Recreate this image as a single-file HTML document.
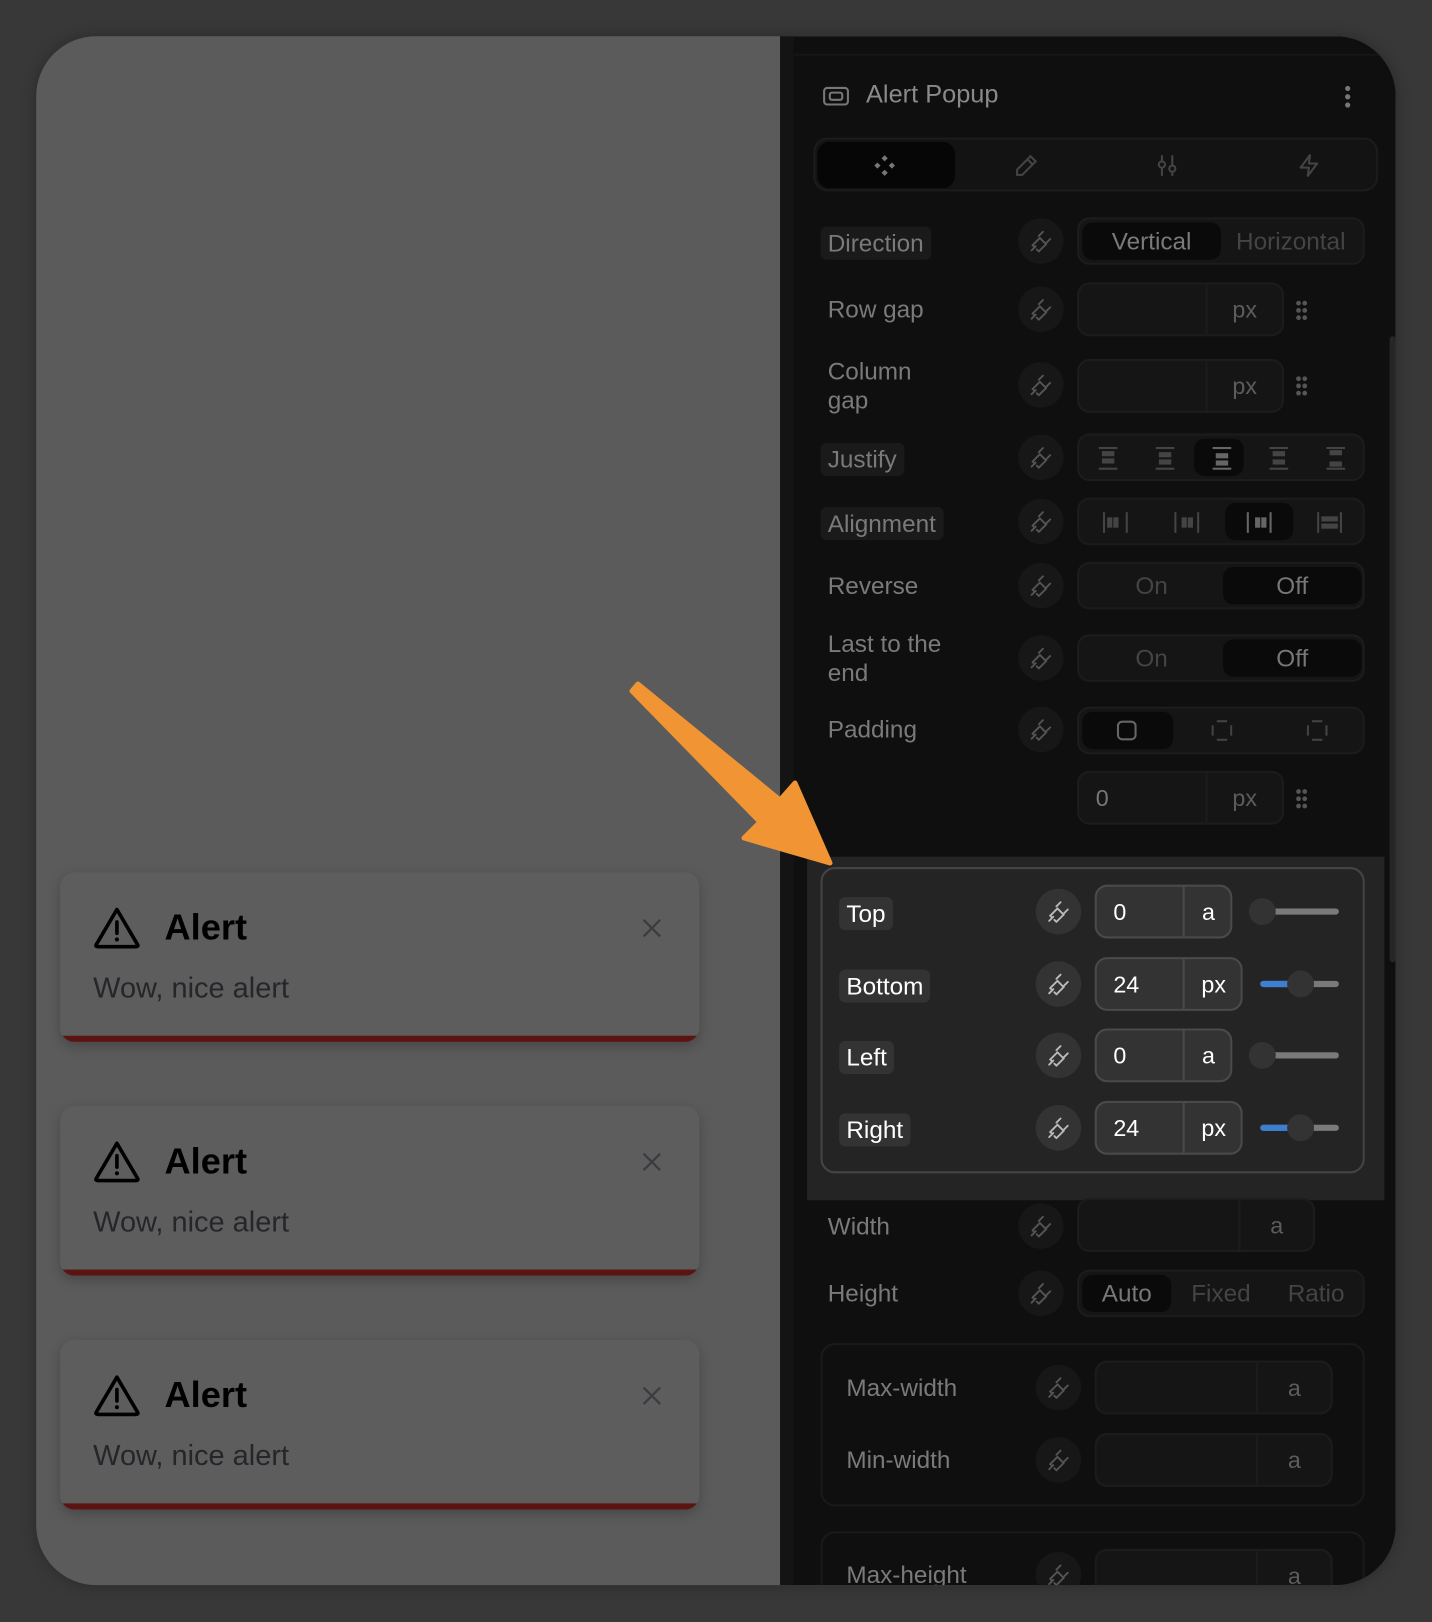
<!DOCTYPE html>
<html><head><meta charset="utf-8"><style>
*{box-sizing:border-box;margin:0;padding:0}
html,body{width:1432px;height:1622px;overflow:hidden;background:#383838;font-family:"Liberation Sans",sans-serif}
#w{position:absolute;left:0;top:0;width:1384px;height:1568px;transform:scale(1.03468);transform-origin:0 0}
.a{position:absolute}
.card{left:35px;top:35px;width:1314px;height:1497px;border-radius:58px;overflow:hidden;background:#5b5b5b;box-shadow:0 0 14px rgba(0,0,0,.25)}
.clip{left:35px;top:35px;width:1314px;height:1497px;border-radius:58px;overflow:hidden}
.inner{left:-35px;top:-35px;width:1384px;height:1568px}
.panel{left:719px;top:0;width:595px;height:1497px;background:#0f0f0f;border-left:13px solid #141414}
.alert{left:23px;width:618px;height:164px;background:#5d5d5d;border-radius:14px;box-shadow:0 4px 12px rgba(0,0,0,.22);overflow:hidden}
.alert .bar{left:0;bottom:0;width:100%;height:6px;background:#5a1512}
.alert .t{left:101px;top:34px;font-size:35px;font-weight:bold;color:#000}
.alert .m{left:32px;top:96px;font-size:28px;color:#26262a}
.alert .x{left:560px;top:42px;width:24px;height:24px}
.lbl{font-size:23.5px;color:#7a7a7a;line-height:28px}
.chip{background:#1a1a1a;border-radius:6px;padding:2px 7px;margin-left:-7px}
.plug{width:44px;height:44px;border-radius:22px;background:#171717}
.plug svg{position:absolute;left:11px;top:11px}
.seg{height:46px;border:2px solid #1c1c1c;background:#151515;border-radius:12px}
.seg .o{position:absolute;top:3px;height:36px;font-size:23.5px;color:#444;text-align:center;line-height:36px;border-radius:10px}
.seg .on{background:#0a0a0a;color:#777}
.inp{height:52px;border:2px solid #1c1c1c;background:#151515;border-radius:12px}
.inp .d{position:absolute;top:0;bottom:0;width:2px;background:#1c1c1c}
.inp .u{position:absolute;top:12px;font-size:22.5px;color:#5c5c5c;text-align:center}
.dots{width:12px;height:20px}
.hl .lbl{color:#fff}
.hl .chip{background:#333}
.hl .plug{background:#333}
.hl .inp{background:#333;border-color:#4a4a4a}
.hl .inp .d{background:#4a4a4a}
.hl .inp .u{color:#fff}
.track{height:6px;background:#7a7a7a;border-radius:3px}
.thumb{width:26px;height:26px;border-radius:13px;background:#333}
</style></head><body>
<div id="w">
<div class="a card">
  <div class="a alert" style="top:808px">
    <svg class="a" style="left:32px;top:33px" width="46" height="42" viewBox="0 0 46 42"><path d="M23 3 L43 37 Q44 39 41 39 L5 39 Q2 39 3 37 Z" fill="none" stroke="#000" stroke-width="3.5" stroke-linejoin="round"/><path d="M23 15 V26" stroke="#000" stroke-width="3.5" stroke-linecap="round"/><circle cx="23" cy="32" r="2" fill="#000"/></svg>
    <div class="a t">Alert</div><div class="a m">Wow, nice alert</div>
    <svg class="a x" viewBox="0 0 24 24"><path d="M4 4L20 20M20 4L4 20" stroke="#3c3c40" stroke-width="2.2"/></svg>
    <div class="a bar"></div>
  </div>
  <div class="a alert" style="top:1034px">
    <svg class="a" style="left:32px;top:33px" width="46" height="42" viewBox="0 0 46 42"><path d="M23 3 L43 37 Q44 39 41 39 L5 39 Q2 39 3 37 Z" fill="none" stroke="#000" stroke-width="3.5" stroke-linejoin="round"/><path d="M23 15 V26" stroke="#000" stroke-width="3.5" stroke-linecap="round"/><circle cx="23" cy="32" r="2" fill="#000"/></svg>
    <div class="a t">Alert</div><div class="a m">Wow, nice alert</div>
    <svg class="a x" viewBox="0 0 24 24"><path d="M4 4L20 20M20 4L4 20" stroke="#3c3c40" stroke-width="2.2"/></svg>
    <div class="a bar"></div>
  </div>
  <div class="a alert" style="top:1260px">
    <svg class="a" style="left:32px;top:33px" width="46" height="42" viewBox="0 0 46 42"><path d="M23 3 L43 37 Q44 39 41 39 L5 39 Q2 39 3 37 Z" fill="none" stroke="#000" stroke-width="3.5" stroke-linejoin="round"/><path d="M23 15 V26" stroke="#000" stroke-width="3.5" stroke-linecap="round"/><circle cx="23" cy="32" r="2" fill="#000"/></svg>
    <div class="a t">Alert</div><div class="a m">Wow, nice alert</div>
    <svg class="a x" viewBox="0 0 24 24"><path d="M4 4L20 20M20 4L4 20" stroke="#3c3c40" stroke-width="2.2"/></svg>
    <div class="a bar"></div>
  </div>
  <div class="a panel"></div>
</div>

<div class="a clip"><div class="a inner">
<div class="a" style="left:767px;top:52px;width:582px;height:2px;background:#161616"></div>
<svg class="a" style="left:795px;top:83px" width="26" height="20" viewBox="0 0 26 20"><rect x="1.5" y="2" width="23" height="16" rx="3" fill="none" stroke="#777" stroke-width="2"/><rect x="7" y="6.5" width="12" height="7" rx="2" fill="none" stroke="#777" stroke-width="2"/></svg>
<div class="a" style="left:837px;top:78px;font-size:24.5px;color:#8a8a8a">Alert Popup</div>
<div class="a" style="left:1300px;top:83px;width:5px;height:20px"><div class="a" style="left:0;top:0;width:5px;height:5px;border-radius:3px;background:#777"></div><div class="a" style="left:0;top:8px;width:5px;height:5px;border-radius:3px;background:#777"></div><div class="a" style="left:0;top:16px;width:5px;height:5px;border-radius:3px;background:#777"></div></div>

<div class="a" style="left:786px;top:133px;width:546px;height:52px;border:2px solid #1c1c1c;background:#131313;border-radius:14px">
  <div class="a" style="left:2px;top:2px;width:133px;height:45px;background:#060606;border-radius:12px"></div>
  <svg class="a" style="left:55px;top:13px" width="24" height="24" viewBox="0 0 24 24" fill="#777"><path d="M12 2l3 3-3 3-3-3z M5 9l3 3-3 3-3-3z M19 9l3 3-3 3-3-3z M12 16l3 3-3 3-3-3z"/></svg>
  <svg class="a" style="left:192px;top:13px" width="24" height="24" viewBox="0 0 24 24" fill="none" stroke="#444" stroke-width="2"><path d="M16 3l5 5L8 21H3v-5z M13 6l5 5"/></svg>
  <svg class="a" style="left:328px;top:13px" width="24" height="24" viewBox="0 0 24 24" fill="none" stroke="#444" stroke-width="2"><path d="M7 2v6M7 14v8M17 2v10M17 18v4"/><circle cx="7" cy="11" r="3"/><circle cx="17" cy="15" r="3"/></svg>
  <svg class="a" style="left:465px;top:13px" width="24" height="24" viewBox="0 0 24 24" fill="none" stroke="#444" stroke-width="2" stroke-linejoin="round"><path d="M13 2L4 14h8l-1 8 9-12h-8z"/></svg>
</div>

<div class="a lbl chip" style="left:800px;top:219px">Direction</div>
<div class="a plug" style="left:984px;top:211px"><svg width="22" height="22" viewBox="0 0 22 22" stroke="#555"><path d="M2 20l4-4M5 17l-2-2 1-1 6-6 6 6-6 6-1 1-2-2M9 6l4-4M16 13l4-4" fill="none" stroke-width="1.8" stroke-linecap="round"/></svg></div>
<div class="a seg" style="left:1041px;top:210px;width:278px"><div class="o on" style="left:3px;width:134px;color:#7a7a7a">Vertical</div><div class="o" style="left:137px;width:135px">Horizontal</div></div>

<div class="a lbl" style="left:800px;top:285px">Row gap</div>
<div class="a plug" style="left:984px;top:277px"><svg width="22" height="22" viewBox="0 0 22 22" stroke="#555"><path d="M2 20l4-4M5 17l-2-2 1-1 6-6 6 6-6 6-1 1-2-2M9 6l4-4M16 13l4-4" fill="none" stroke-width="1.8" stroke-linecap="round"/></svg></div>
<div class="a inp" style="left:1041px;top:273px;width:200px"><div class="d" style="left:122px"></div><div class="u" style="left:124px;width:72px">px</div></div>
<svg class="a dots" style="left:1252px;top:290px" viewBox="0 0 12 20" fill="#555"><circle cx="3" cy="3" r="2.3"/><circle cx="9" cy="3" r="2.3"/><circle cx="3" cy="10" r="2.3"/><circle cx="9" cy="10" r="2.3"/><circle cx="3" cy="17" r="2.3"/><circle cx="9" cy="17" r="2.3"/></svg>

<div class="a lbl" style="left:800px;top:345px">Column<br>gap</div>
<div class="a plug" style="left:984px;top:350px"><svg width="22" height="22" viewBox="0 0 22 22" stroke="#555"><path d="M2 20l4-4M5 17l-2-2 1-1 6-6 6 6-6 6-1 1-2-2M9 6l4-4M16 13l4-4" fill="none" stroke-width="1.8" stroke-linecap="round"/></svg></div>
<div class="a inp" style="left:1041px;top:347px;width:200px"><div class="d" style="left:122px"></div><div class="u" style="left:124px;width:72px">px</div></div>
<svg class="a dots" style="left:1252px;top:363px" viewBox="0 0 12 20" fill="#555"><circle cx="3" cy="3" r="2.3"/><circle cx="9" cy="3" r="2.3"/><circle cx="3" cy="10" r="2.3"/><circle cx="9" cy="10" r="2.3"/><circle cx="3" cy="17" r="2.3"/><circle cx="9" cy="17" r="2.3"/></svg>

<div class="a lbl chip" style="left:800px;top:428px">Justify</div>
<div class="a plug" style="left:984px;top:420px"><svg width="22" height="22" viewBox="0 0 22 22" stroke="#555"><path d="M2 20l4-4M5 17l-2-2 1-1 6-6 6 6-6 6-1 1-2-2M9 6l4-4M16 13l4-4" fill="none" stroke-width="1.8" stroke-linecap="round"/></svg></div>
<div class="a seg" style="left:1041px;top:419px;width:278px">
  <div class="o on" style="left:111px;width:48px"></div>
  <svg class="a" style="left:17px;top:10px" width="22" height="24" viewBox="0 0 22 24" fill="#444"><rect x="2" y="1" width="18" height="2"/><rect x="5" y="5" width="12" height="5"/><rect x="5" y="12" width="12" height="5"/><rect x="2" y="21" width="18" height="2"/></svg>
  <svg class="a" style="left:72px;top:10px" width="22" height="24" viewBox="0 0 22 24" fill="#444"><rect x="2" y="1" width="18" height="2"/><rect x="5" y="6" width="12" height="5"/><rect x="5" y="13" width="12" height="5"/><rect x="2" y="21" width="18" height="2"/></svg>
  <svg class="a" style="left:127px;top:10px" width="22" height="24" viewBox="0 0 22 24" fill="#666"><rect x="2" y="1" width="18" height="2"/><rect x="5" y="7" width="12" height="5"/><rect x="5" y="14" width="12" height="5"/><rect x="2" y="21" width="18" height="2"/></svg>
  <svg class="a" style="left:182px;top:10px" width="22" height="24" viewBox="0 0 22 24" fill="#444"><rect x="2" y="1" width="18" height="2"/><rect x="5" y="5" width="12" height="5"/><rect x="5" y="13" width="12" height="5"/><rect x="2" y="21" width="18" height="2"/></svg>
  <svg class="a" style="left:237px;top:10px" width="22" height="24" viewBox="0 0 22 24" fill="#444"><rect x="2" y="1" width="18" height="2"/><rect x="5" y="4" width="12" height="5"/><rect x="5" y="15" width="12" height="5"/><rect x="2" y="21" width="18" height="2"/></svg>
</div>

<div class="a lbl chip" style="left:800px;top:490px">Alignment</div>
<div class="a plug" style="left:984px;top:482px"><svg width="22" height="22" viewBox="0 0 22 22" stroke="#555"><path d="M2 20l4-4M5 17l-2-2 1-1 6-6 6 6-6 6-1 1-2-2M9 6l4-4M16 13l4-4" fill="none" stroke-width="1.8" stroke-linecap="round"/></svg></div>
<div class="a seg" style="left:1041px;top:481px;width:278px">
  <div class="o on" style="left:141px;width:66px"></div>
  <svg class="a" style="left:22px;top:10px" width="26" height="24" viewBox="0 0 26 24" fill="#444"><rect x="1" y="2" width="2" height="20"/><rect x="23" y="2" width="2" height="20"/><rect x="5" y="7" width="5" height="10"/><rect x="11" y="7" width="5" height="10"/></svg>
  <svg class="a" style="left:91px;top:10px" width="26" height="24" viewBox="0 0 26 24" fill="#444"><rect x="1" y="2" width="2" height="20"/><rect x="23" y="2" width="2" height="20"/><rect x="8" y="7" width="5" height="10"/><rect x="14" y="7" width="5" height="10"/></svg>
  <svg class="a" style="left:161px;top:10px" width="26" height="24" viewBox="0 0 26 24" fill="#666"><rect x="1" y="2" width="2" height="20"/><rect x="23" y="2" width="2" height="20"/><rect x="9" y="7" width="5" height="10"/><rect x="15" y="7" width="5" height="10"/></svg>
  <svg class="a" style="left:229px;top:10px" width="26" height="24" viewBox="0 0 26 24" fill="#444"><rect x="1" y="2" width="2" height="20"/><rect x="23" y="2" width="2" height="20"/><rect x="5" y="6" width="16" height="5"/><rect x="5" y="13" width="16" height="5"/></svg>
</div>

<div class="a lbl" style="left:800px;top:552px">Reverse</div>
<div class="a plug" style="left:984px;top:544px"><svg width="22" height="22" viewBox="0 0 22 22" stroke="#555"><path d="M2 20l4-4M5 17l-2-2 1-1 6-6 6 6-6 6-1 1-2-2M9 6l4-4M16 13l4-4" fill="none" stroke-width="1.8" stroke-linecap="round"/></svg></div>
<div class="a seg" style="left:1041px;top:543px;width:278px"><div class="o" style="left:3px;width:134px">On</div><div class="o on" style="left:139px;width:134px">Off</div></div>

<div class="a lbl" style="left:800px;top:608px">Last to the<br>end</div>
<div class="a plug" style="left:984px;top:614px"><svg width="22" height="22" viewBox="0 0 22 22" stroke="#555"><path d="M2 20l4-4M5 17l-2-2 1-1 6-6 6 6-6 6-1 1-2-2M9 6l4-4M16 13l4-4" fill="none" stroke-width="1.8" stroke-linecap="round"/></svg></div>
<div class="a seg" style="left:1041px;top:613px;width:278px"><div class="o" style="left:3px;width:134px">On</div><div class="o on" style="left:139px;width:134px">Off</div></div>

<div class="a lbl" style="left:800px;top:691px">Padding</div>
<div class="a plug" style="left:984px;top:683px"><svg width="22" height="22" viewBox="0 0 22 22" stroke="#555"><path d="M2 20l4-4M5 17l-2-2 1-1 6-6 6 6-6 6-1 1-2-2M9 6l4-4M16 13l4-4" fill="none" stroke-width="1.8" stroke-linecap="round"/></svg></div>
<div class="a seg" style="left:1041px;top:683px;width:278px">
  <div class="o on" style="left:3px;width:88px"></div>
  <svg class="a" style="left:36px;top:11px" width="20" height="20" viewBox="0 0 20 20"><rect x="1.5" y="1.5" width="17" height="17" rx="4" fill="none" stroke="#666" stroke-width="2"/></svg>
  <svg class="a" style="left:128px;top:11px" width="20" height="20" viewBox="0 0 20 20" stroke="#444" stroke-width="2" fill="none"><path d="M5 1h10M5 19h10M1 5v10M19 5v10"/></svg>
  <svg class="a" style="left:220px;top:11px" width="20" height="20" viewBox="0 0 20 20" stroke="#444" stroke-width="2" fill="none"><path d="M5 1h10M5 19h10M1 5v10M19 5v10"/></svg>
</div>
<div class="a inp" style="left:1041px;top:745px;width:200px"><div class="u" style="left:16px;color:#777">0</div><div class="d" style="left:122px"></div><div class="u" style="left:124px;width:72px">px</div></div>
<svg class="a dots" style="left:1252px;top:762px" viewBox="0 0 12 20" fill="#555"><circle cx="3" cy="3" r="2.3"/><circle cx="9" cy="3" r="2.3"/><circle cx="3" cy="10" r="2.3"/><circle cx="9" cy="10" r="2.3"/><circle cx="3" cy="17" r="2.3"/><circle cx="9" cy="17" r="2.3"/></svg>

<div class="a hl" style="left:780px;top:828px;width:558px;height:332px;background:#242424">
  <div class="a" style="left:13px;top:10px;width:526px;height:296px;border:2px solid #444;border-radius:14px"></div>
</div>
<div class="hl">
  <div class="a lbl chip" style="left:818px;top:867px">Top</div>
  <div class="a lbl chip" style="left:818px;top:937px">Bottom</div>
  <div class="a lbl chip" style="left:818px;top:1006px">Left</div>
  <div class="a lbl chip" style="left:818px;top:1076px">Right</div>
  <div class="a plug" style="left:1001px;top:859px"><svg width="22" height="22" viewBox="0 0 22 22" stroke="#bbb"><path d="M2 20l4-4M5 17l-2-2 1-1 6-6 6 6-6 6-1 1-2-2M9 6l4-4M16 13l4-4" fill="none" stroke-width="1.8" stroke-linecap="round"/></svg></div>
  <div class="a plug" style="left:1001px;top:929px"><svg width="22" height="22" viewBox="0 0 22 22" stroke="#bbb"><path d="M2 20l4-4M5 17l-2-2 1-1 6-6 6 6-6 6-1 1-2-2M9 6l4-4M16 13l4-4" fill="none" stroke-width="1.8" stroke-linecap="round"/></svg></div>
  <div class="a plug" style="left:1001px;top:998px"><svg width="22" height="22" viewBox="0 0 22 22" stroke="#bbb"><path d="M2 20l4-4M5 17l-2-2 1-1 6-6 6 6-6 6-1 1-2-2M9 6l4-4M16 13l4-4" fill="none" stroke-width="1.8" stroke-linecap="round"/></svg></div>
  <div class="a plug" style="left:1001px;top:1068px"><svg width="22" height="22" viewBox="0 0 22 22" stroke="#bbb"><path d="M2 20l4-4M5 17l-2-2 1-1 6-6 6 6-6 6-1 1-2-2M9 6l4-4M16 13l4-4" fill="none" stroke-width="1.8" stroke-linecap="round"/></svg></div>
  <div class="a inp" style="left:1058px;top:855px;width:133px"><div class="u" style="left:16px">0</div><div class="d" style="left:83px"></div><div class="u" style="left:85px;width:46px">a</div></div>
  <div class="a inp" style="left:1058px;top:925px;width:143px"><div class="u" style="left:16px">24</div><div class="d" style="left:83px"></div><div class="u" style="left:85px;width:56px">px</div></div>
  <div class="a inp" style="left:1058px;top:994px;width:133px"><div class="u" style="left:16px">0</div><div class="d" style="left:83px"></div><div class="u" style="left:85px;width:46px">a</div></div>
  <div class="a inp" style="left:1058px;top:1064px;width:143px"><div class="u" style="left:16px">24</div><div class="d" style="left:83px"></div><div class="u" style="left:85px;width:56px">px</div></div>
  <div class="a track" style="left:1220px;top:878px;width:74px"></div><div class="a thumb" style="left:1207px;top:868px"></div>
  <div class="a track" style="left:1218px;top:948px;width:76px"></div><div class="a" style="left:1218px;top:948px;width:40px;height:6px;background:#3b7ed2;border-radius:3px"></div><div class="a thumb" style="left:1244px;top:938px"></div>
  <div class="a track" style="left:1220px;top:1017px;width:74px"></div><div class="a thumb" style="left:1207px;top:1007px"></div>
  <div class="a track" style="left:1218px;top:1087px;width:76px"></div><div class="a" style="left:1218px;top:1087px;width:40px;height:6px;background:#3b7ed2;border-radius:3px"></div><div class="a thumb" style="left:1244px;top:1077px"></div>
</div>

<div class="a lbl" style="left:800px;top:1171px">Width</div>
<div class="a plug" style="left:984px;top:1163px"><svg width="22" height="22" viewBox="0 0 22 22" stroke="#555"><path d="M2 20l4-4M5 17l-2-2 1-1 6-6 6 6-6 6-1 1-2-2M9 6l4-4M16 13l4-4" fill="none" stroke-width="1.8" stroke-linecap="round"/></svg></div>
<div class="a inp" style="left:1041px;top:1158px;width:230px"><div class="d" style="left:154px"></div><div class="u" style="left:156px;width:70px">a</div></div>

<div class="a lbl" style="left:800px;top:1236px">Height</div>
<div class="a plug" style="left:984px;top:1228px"><svg width="22" height="22" viewBox="0 0 22 22" stroke="#555"><path d="M2 20l4-4M5 17l-2-2 1-1 6-6 6 6-6 6-1 1-2-2M9 6l4-4M16 13l4-4" fill="none" stroke-width="1.8" stroke-linecap="round"/></svg></div>
<div class="a seg" style="left:1041px;top:1227px;width:278px"><div class="o on" style="left:3px;width:86px">Auto</div><div class="o" style="left:92px;width:90px">Fixed</div><div class="o" style="left:184px;width:90px">Ratio</div></div>

<div class="a" style="left:793px;top:1298px;width:526px;height:158px;border:2px solid #1a1a1a;border-radius:14px"></div>
<div class="a lbl" style="left:818px;top:1327px">Max-width</div>
<div class="a plug" style="left:1001px;top:1319px"><svg width="22" height="22" viewBox="0 0 22 22" stroke="#555"><path d="M2 20l4-4M5 17l-2-2 1-1 6-6 6 6-6 6-1 1-2-2M9 6l4-4M16 13l4-4" fill="none" stroke-width="1.8" stroke-linecap="round"/></svg></div>
<div class="a inp" style="left:1058px;top:1315px;width:230px"><div class="d" style="left:154px"></div><div class="u" style="left:156px;width:70px">a</div></div>
<div class="a lbl" style="left:818px;top:1397px">Min-width</div>
<div class="a plug" style="left:1001px;top:1389px"><svg width="22" height="22" viewBox="0 0 22 22" stroke="#555"><path d="M2 20l4-4M5 17l-2-2 1-1 6-6 6 6-6 6-1 1-2-2M9 6l4-4M16 13l4-4" fill="none" stroke-width="1.8" stroke-linecap="round"/></svg></div>
<div class="a inp" style="left:1058px;top:1385px;width:230px"><div class="d" style="left:154px"></div><div class="u" style="left:156px;width:70px">a</div></div>

<div class="a" style="left:793px;top:1480px;width:526px;height:158px;border:2px solid #1a1a1a;border-radius:14px"></div>
<div class="a lbl" style="left:818px;top:1508px">Max-height</div>
<div class="a plug" style="left:1001px;top:1500px"><svg width="22" height="22" viewBox="0 0 22 22" stroke="#555"><path d="M2 20l4-4M5 17l-2-2 1-1 6-6 6 6-6 6-1 1-2-2M9 6l4-4M16 13l4-4" fill="none" stroke-width="1.8" stroke-linecap="round"/></svg></div>
<div class="a inp" style="left:1058px;top:1497px;width:230px"><div class="d" style="left:154px"></div><div class="u" style="left:156px;width:70px">a</div></div>

<div class="a" style="left:1343px;top:325px;width:6px;height:605px;background:#262626;border-radius:3px"></div>
</div></div>
</div>

<svg style="position:absolute;left:0;top:0" width="1432" height="1622"><polygon points="632,691 638,684 780,800 795,783 830,863 744,838 760,822" fill="#f09434" stroke="#f09434" stroke-width="5" stroke-linejoin="round"/></svg>
</body></html>
